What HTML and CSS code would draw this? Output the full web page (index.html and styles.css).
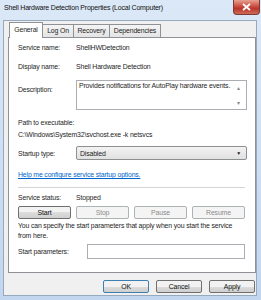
FILE: index.html
```html
<!DOCTYPE html>
<html lang="en">
<head>
  <meta charset="UTF-8">
  <title>Shell Hardware Detection Properties</title>
  <link rel="stylesheet" href="styles.css">
</head>
<body>
  <div class="window">
    <div class="titlebar">
      <span class="title">Shell Hardware Detection Properties (Local Computer)</span>
      <span class="close">
        <svg width="9" height="8" viewBox="0 0 9 8"><path d="M1 1 L8 7 M8 1 L1 7" stroke="#fff" stroke-width="1.8"/></svg>
      </span>
    </div>
    <div class="frame">
      <div class="tabs">
        <span class="tab active">General</span><span class="tab t2">Log On</span><span class="tab t3">Recovery</span><span class="tab t4">Dependencies</span>
      </div>
      <div class="panel">
        <div class="row r1"><span class="label">Service name:</span><span>ShellHWDetection</span></div>
        <div class="row r2"><span class="label">Display name:</span><span>Shell Hardware Detection</span></div>
        <div class="row desc">
          <span class="label">Description:</span>
          <div class="descbox">
            <span>Provides notifications for AutoPlay hardware events.</span>
            <div class="scroll"><span>&#9652;</span><span>&#9662;</span></div>
          </div>
        </div>
        <div class="path-label">Path to executable:</div>
        <div class="path">C:\Windows\System32\svchost.exe -k netsvcs</div>
        <div class="row startup">
          <span class="label">Startup type:</span>
          <div class="combo"><span>Disabled</span><span class="arrow">&#9660;</span></div>
        </div>
        <a class="link">Help me configure service startup options.</a>
        <div class="sep"></div>
        <div class="row status"><span class="label">Service status:</span><span>Stopped</span></div>
        <div class="actions">
          <span class="btn">Start</span>
          <span class="btn disabled">Stop</span>
          <span class="btn disabled">Pause</span>
          <span class="btn disabled">Resume</span>
        </div>
        <p class="note">You can specify the start parameters that apply when you start the service from here.</p>
        <div class="row params">
          <span class="label wide">Start parameters:</span>
          <div class="input"></div>
        </div>
      </div>
      <div class="footer">
        <span class="btn def">OK</span>
        <span class="btn">Cancel</span>
        <span class="btn">Apply</span>
      </div>
    </div>
  </div>
</body>
</html>
```

FILE: styles.css
```css
html,
body {
  margin: 0;
  background: #c9dcf2;
  font-family: "Liberation Sans", Arial, sans-serif;
  font-size: 6.9px;
  letter-spacing: -0.15px;
  color: #1e1e1e;
}
.window {
  width: 261px;
  height: 300px;
  overflow: hidden;
  background: linear-gradient(#dbe8f7, #c2d6ef);
}
.titlebar {
  height: 20px;
  display: flex;
  justify-content: space-between;
  align-items: flex-start;
}
.title {
  font-size: 7px;
  letter-spacing: -0.2px;
  color: #111;
  padding: 4px 0 0 4px;
  white-space: nowrap;
}
.close {
  width: 27px;
  height: 15px;
  margin-right: 1px;
  display: flex;
  align-items: center;
  justify-content: center;
  background: linear-gradient(#e8a090, #c7453a 50%, #b8362b 60%, #d06a56);
  border: 1px solid #7a3b36;
  border-top: none;
  border-radius: 0 0 4px 4px;
  box-sizing: border-box;
}
.frame {
  margin: 0 4px 0 3px;
  height: 276px;
  background: #f0f0f0;
  padding: 2px 0 0 4px;
  box-sizing: border-box;
  border: 1px solid #97a9bf;
}
.tabs {
  display: flex;
  align-items: flex-end;
  height: 14px;
  padding-left: 1px;
  position: relative;
  z-index: 1;
}
.tab {
  height: 12px;
  line-height: 12px;
  text-align: center;
  border: 1px solid #8e9297;
  border-bottom: none;
  border-left: none;
  background: linear-gradient(#f4f4f4, #e4e4e4);
}
.tab.active {
  width: 32px;
  height: 15px;
  line-height: 14px;
  border-left: 1px solid #8e9297;
  background: #fff;
  margin-bottom: -1px;
}
.t2 {
  width: 30px;
}
.t3 {
  width: 35px;
}
.t4 {
  width: 50px;
}
.panel {
  width: 248px;
  height: 236px;
  box-sizing: border-box;
  background: #fff;
  border: 1px solid #8e9297;
  padding: 4px 8px 0 9px;
}
.row {
  display: flex;
  align-items: center;
  height: 10px;
}
.label {
  width: 58px;
  flex: none;
}
.label.wide {
  width: 69px;
}
.r2 {
  margin-top: 9px;
}
.desc {
  margin-top: 9px;
  height: 30px;
  align-items: flex-start;
}
.desc .label {
  padding-top: 6px;
}
.descbox {
  flex: 1;
  height: 30px;
  border: 1px solid #abadb3;
  box-sizing: border-box;
  display: flex;
  justify-content: space-between;
  padding: 1px 0 0 2px;
  white-space: nowrap;
}
.scroll {
  width: 9px;
  display: flex;
  flex-direction: column;
  justify-content: space-between;
  color: #8a8a8a;
  font-size: 6px;
  padding: 2px 0 3px;
}
.path-label {
  margin-top: 8px;
  line-height: 10px;
}
.path {
  margin-top: 2px;
  line-height: 10px;
}
.startup {
  margin-top: 6px;
  height: 14px;
}
.combo {
  flex: 1;
  height: 14px;
  box-sizing: border-box;
  border: 1px solid #8e8f8f;
  border-radius: 2px;
  background: linear-gradient(#f3f3f3, #e1e1e1);
  display: flex;
  justify-content: space-between;
  align-items: center;
  padding: 0 5px 0 3px;
}
.arrow {
  font-size: 5px;
  color: #222;
}
.link {
  display: block;
  margin-top: 10px;
  line-height: 10px;
  color: #0066cc;
  text-decoration: underline;
}
.sep {
  margin-top: 7px;
  height: 1px;
  background: #d5d5d5;
  margin-right: 2px;
}
.status {
  margin-top: 4px;
}
.actions {
  margin-top: 4px;
  display: flex;
  gap: 5px;
  margin-right: 2px;
}
.actions .btn {
  flex: 1;
}
.btn {
  height: 13px;
  box-sizing: border-box;
  border: 1px solid #707070;
  border-radius: 2px;
  background: linear-gradient(#f2f2f2 50%, #dddddd 50%, #cfcfcf);
  display: flex;
  align-items: center;
  justify-content: center;
  color: #111;
}
.btn.disabled {
  border-color: #adb2b5;
  background: #f4f4f4;
  color: #8d8d8d;
}
.note {
  margin: 2px 0 0;
  line-height: 10px;
}
.params {
  margin-top: 3px;
  height: 15px;
}
.input {
  flex: 1;
  height: 15px;
  box-sizing: border-box;
  border: 1px solid #abadb3;
  margin-right: 2px;
}
.footer {
  margin-top: 7px;
  display: flex;
  justify-content: flex-end;
  gap: 7px;
  padding-right: 1px;
}
.footer .btn {
  width: 46px;
}
.footer .btn.def {
  border-color: #3c7fb1;
}
```
